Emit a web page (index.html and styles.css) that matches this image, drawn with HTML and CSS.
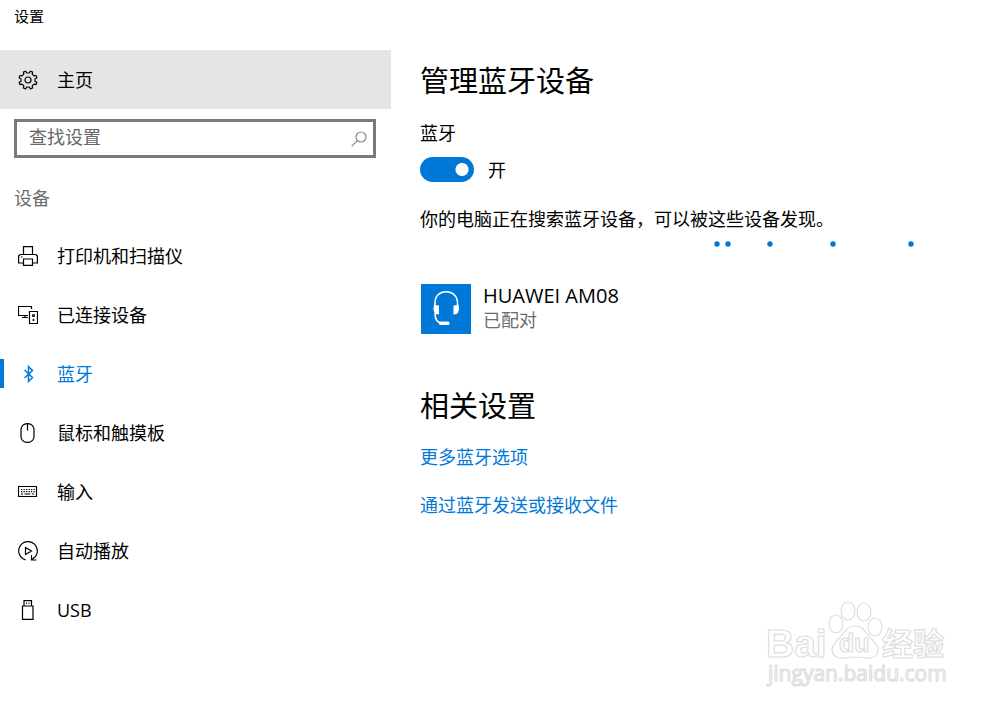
FILE: index.html
```
<!DOCTYPE html>
<html lang="zh-CN">
<head>
  <meta charset="UTF-8" />
  <meta name="viewport" content="width=device-width, initial-scale=1.0" />
  <title>设置</title>
  <link rel="stylesheet" href="styles.css">
</head>
<body>
  <header class="titlebar">设置</header>

  <div class="layout">
    <aside class="sidebar">
      <a href="#" class="nav-item home">
        <svg class="icon" viewBox="0 0 20 20"><path stroke-linejoin="round" d="M7.600 1.200L8.800 3h2.400l1.200-1.800 2.200.9-.4 2.100 1.700 1.700 2.100-.4.9 2.200L17 8.900v2.300l1.900 1.200-.9 2.200-2.100-.4-1.700 1.700.4 2.100-2.200.9L11.200 17H8.800l-1.200 1.900-2.200-.9.4-2.100-1.700-1.700-2.100.4-.9-2.200L3 11.200V8.900L1.100 7.700 2 5.500l2.100.4 1.700-1.700-.4-2.100z"/><circle cx="10" cy="10" r="3"/></svg>
        <span>主页</span>
      </a>

      <form class="search">
        <input type="text" placeholder="查找设置" aria-label="查找设置">
        <button type="submit" aria-label="搜索">
          <svg class="icon-search" viewBox="0 0 16 16"><circle cx="10" cy="6" r="5"/><path d="M6.500 9.500L.7 15.300"/></svg>
        </button>
      </form>

      <h2 class="group">设备</h2>

      <nav>
        <a href="#" class="nav-item">
          <svg class="icon" viewBox="0 0 20 20"><path d="M5.500 8.500V.6h9v7.900M5.500 17H.6v-7l1.500-1.500h15.800l1.500 1.500v7h-4.900M5.500 13h9v6.400h-9z"/><path d="M3 11h1.500"/></svg>
          <span>打印机和扫描仪</span>
        </a>
        <a href="#" class="nav-item">
          <svg class="icon" viewBox="0 0 20 20"><path d="M13.500 4V1.500H.5v9H10M7 10.500v2M4 12.500h6M11.500 6.500h8v12h-8z"/><circle cx="15.500" cy="10.500" r="1"/><path d="M14.500 15h2M15.500 14v2"/></svg>
          <span>已连接设备</span>
        </a>
        <a href="#" class="nav-item active">
          <svg class="icon icon-bold" viewBox="0 0 20 20"><path d="M6.500 6l8 7.500-4 4v-15l4 4L6.500 14"/></svg>
          <span>蓝牙</span>
        </a>
        <a href="#" class="nav-item">
          <svg class="icon" viewBox="0 0 20 20"><rect x="3" y=".6" width="13" height="18.800" rx="6"/><path d="M9.500 1v6.500"/></svg>
          <span>鼠标和触摸板</span>
        </a>
        <a href="#" class="nav-item">
          <svg class="icon" viewBox="0 0 20 20"><path d="M.5 4.500h18v10H.5z"/><path d="M3 7.500h14M3 9.700h14" stroke-dasharray="1.300 1.200"/><path d="M3 12h2M6.500 12h6M14 12h2"/></svg>
          <span>输入</span>
        </a>
        <a href="#" class="nav-item">
          <svg class="icon" viewBox="0 0 20 20"><path d="M7.500 18.800A9.300 9.300 0 1 1 14.500 18M13.500 14v5h5M13.700 18.800l3-3M7.500 6.500v7l6-3.500z"/></svg>
          <span>自动播放</span>
        </a>
        <a href="#" class="nav-item">
          <svg class="icon" viewBox="0 0 20 20"><path d="M6 6V.6h7.500V6M4.500 6H15v13.400H4.500zM8 3.300h1M10.500 3.300h1"/></svg>
          <span>USB</span>
        </a>
      </nav>
    </aside>

    <main class="content">
      <h1>管理蓝牙设备</h1>
      <label class="label" for="bluetooth">蓝牙</label>
      <div class="toggle-row">
        <input type="checkbox" role="switch" id="bluetooth" class="toggle" checked>
        <span>开</span>
      </div>
      <p class="status">你的电脑正在搜索蓝牙设备，可以被这些设备发现。</p>
      <svg class="progress" viewBox="0 0 500 8" width="500" height="8">
        <circle cx="297" cy="4" r="2.700"/>
        <circle cx="308" cy="4" r="2.700"/>
        <circle cx="350" cy="4" r="2.700"/>
        <circle cx="413" cy="4" r="2.700"/>
        <circle cx="491" cy="4" r="2.700"/>
      </svg>

      <div class="device">
        <div class="device-icon">
          <svg viewBox="0 0 50 50" width="50" height="50">
            <path d="M14 22v-3c0-7 4.500-11.300 11-11.300S36.500 12 36.500 19v3M14 29c0 7 2 10 7 10" fill="none" stroke="#fff" stroke-width="1.600"/>
            <path d="M13 21l5 .5v9l-3.500-.5c-2-2-2.500-6-1.500-9zM37.500 21l-5 .5v9l3.500-.5c2-2 2.500-6 1.500-9z" fill="#fff"/>
            <rect x="18" y="37.500" width="10.500" height="3.500" rx="1.500" fill="#fff"/>
          </svg>
        </div>
        <div>
          <div class="device-name">HUAWEI AM08</div>
          <div class="muted">已配对</div>
        </div>
      </div>

      <h1>相关设置</h1>
      <div class="links">
        <a href="#">更多蓝牙选项</a>
        <a href="#">通过蓝牙发送或接收文件</a>
      </div>
    </main>
  </div>

  <svg class="watermark" viewBox="0 0 185 92" width="185" height="92">
    <ellipse cx="71" cy="26" rx="7" ry="9"/>
    <ellipse cx="83" cy="13" rx="7" ry="9"/>
    <ellipse cx="99" cy="14" rx="7" ry="9"/>
    <ellipse cx="110" cy="29" rx="7" ry="9"/>
    <path d="M90 28c7 0 10 5 14 10s9 8 9 14c0 5-4 8-9 8-5 0-9-1-14-1s-9 1-14 1c-5 0-9-3-9-8 0-6 5-9 9-14s7-10 14-10z"/>
    <text x="1" y="59" class="wm-baidu">Bai</text>
    <text x="74" y="54" class="wm-du">du</text>
    <text x="117" y="57" class="wm-cn">经验</text>
    <text x="3" y="83" class="wm-url">jingyan.baidu.com</text>
  </svg>
</body>
</html>
```
FILE: styles.css
```
* {
  box-sizing: border-box;
}

body {
  margin: 0;
  min-height: 100vh;
  position: relative;
  background: #fff;
  color: #000;
  font-family: "Open Sans", "Noto Sans CJK SC", sans-serif;
  font-size: 18px;
  line-height: 24px;
}

a {
  color: #0078d7;
  text-decoration: none;
}

h1, h2, p {
  margin: 0;
  font-weight: normal;
}

.titlebar {
  height: 50px;
  padding: 4px 14px;
  font-size: 15px;
}

.layout {
  display: flex;
}

.sidebar {
  width: 391px;
  flex-shrink: 0;
}

.nav-item {
  display: flex;
  align-items: center;
  gap: 19px;
  height: 59px;
  padding-left: 18px;
  color: #000;
}

.home {
  background: #e5e5e5;
}

.nav-item.active {
  color: #0078d7;
  background: linear-gradient(#0078d7, #0078d7) left center / 4px 29px no-repeat;
}

.icon {
  width: 20px;
  height: 20px;
  fill: none;
  stroke: currentColor;
  stroke-width: 1.2;
}

.icon-bold {
  stroke-width: 1.5;
}

.search {
  display: flex;
  height: 39px;
  margin: 10px 15px 0 14px;
  border: 3px solid #7a7a7a;
}

.search input {
  flex: 1;
  min-width: 0;
  border: 0;
  outline: 0;
  padding: 0 12px 4px;
  font: inherit;
}

.search input::placeholder {
  color: #666;
}

.search button {
  width: 28px;
  padding: 0;
  border: 0;
  background: none;
}

.icon-search {
  display: block;
  margin: 0 auto;
  width: 16px;
  height: 16px;
  fill: none;
  stroke: #888;
  stroke-width: 1.2;
}

.group {
  margin: 28px 14px 16px;
  color: #6d6d6d;
  font-size: 18px;
}

.content {
  flex: 1;
  padding: 11px 20px 20px 29px;
}

h1 {
  font-size: 29px;
  line-height: 40px;
}

.label {
  display: block;
  margin-top: 20px;
}

.toggle-row {
  display: flex;
  align-items: center;
  gap: 14px;
  margin-top: 12px;
}

.toggle {
  appearance: none;
  width: 54px;
  height: 25px;
  margin: 0;
  border-radius: 13px;
  background: #999;
}

.toggle:checked {
  background: radial-gradient(circle at 42px 50%, #fff 6px, #0078d7 7px);
}

.status {
  margin-top: 25px;
}

.progress {
  display: block;
  max-width: 100%;
  margin-top: 9px;
  fill: #0078d7;
}

.device {
  display: flex;
  gap: 12px;
  margin: 36px 0 52px 1px;
}

.device-icon {
  width: 50px;
  height: 50px;
  background: #0078d7;
}

.device-name {
  font-size: 20px;
}

.muted {
  color: #6d6d6d;
}

.links {
  display: flex;
  flex-direction: column;
  align-items: flex-start;
  gap: 24px;
  margin-top: 19px;
}

/* site mark over the bottom right corner */
.watermark {
  position: absolute;
  right: 50px;
  bottom: 19px;
  fill: #fff;
  stroke: #dedede;
  stroke-width: 1.2;
  pointer-events: none;
}

.wm-baidu {
  font: bold 39px "Liberation Sans", sans-serif;
}

.wm-du {
  font: bold 25px "Liberation Sans", sans-serif;
}

.wm-cn {
  font: bold 31px "Noto Sans CJK SC", sans-serif;
}

.wm-url {
  font: 21px "Open Sans", sans-serif;
}
```
